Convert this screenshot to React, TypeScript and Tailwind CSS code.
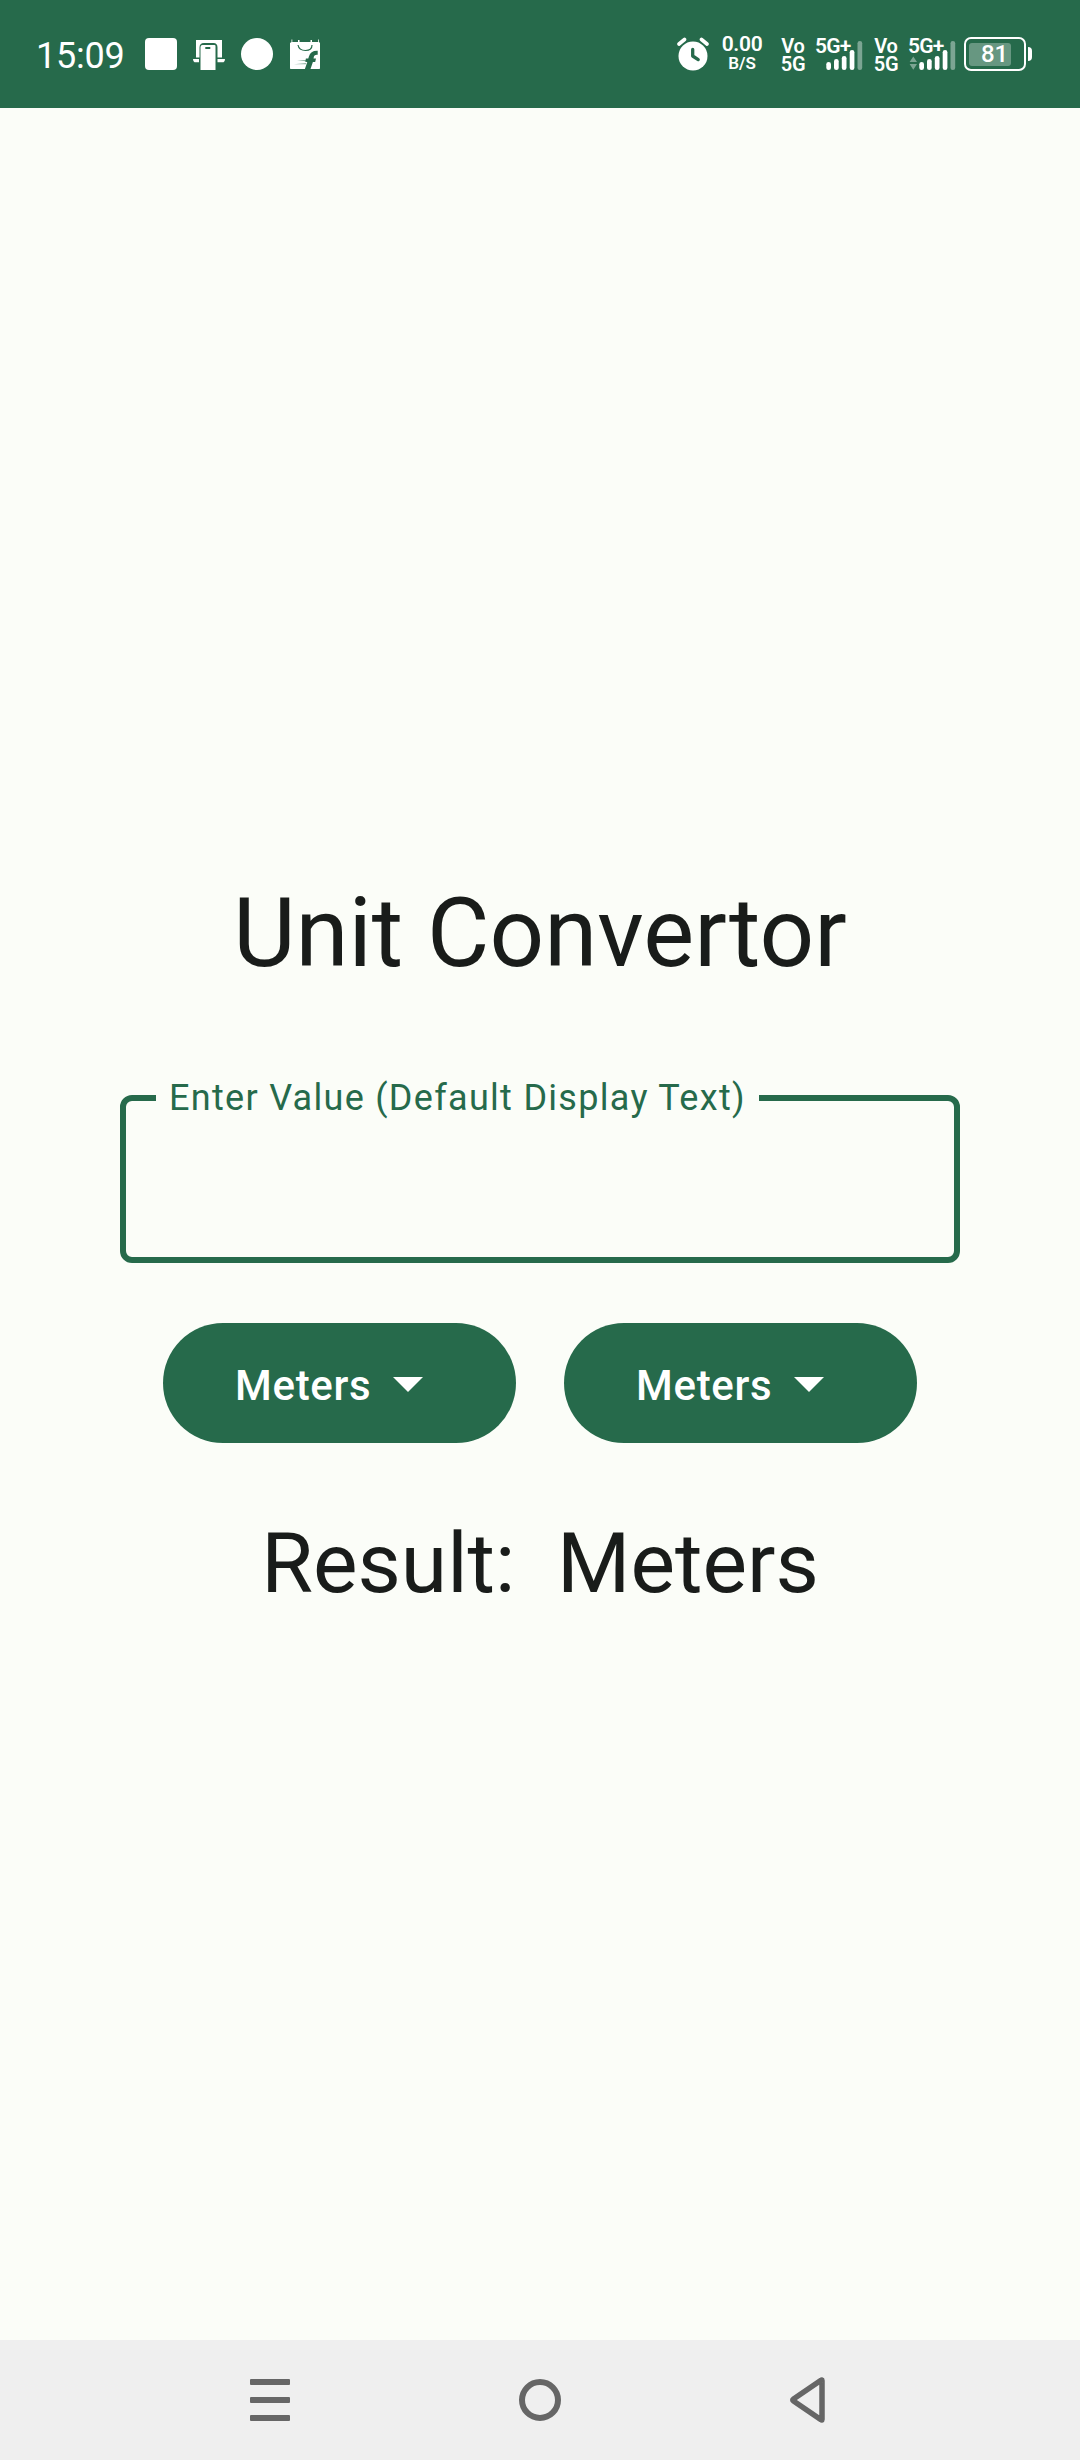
import React from "react";

function NotificationIcons() {
  return (
    <div className="flex h-8 gap-4">
      <div className="size-8 rounded-[4px] bg-white" />
      <svg className="size-8" viewBox="0 0 32 32" fill="#fff">
        <path d="M3 2h26v17.500H24.500V9.500Q24.500 5 20.500 5H11Q6.500 5 6.500 9.500V19.500H3z" />
        <path d="M0 21h6v3.300H1.500Q0 23.500 0 21zM24.500 21h7.500q0 2.500-1.500 3.300h-6z" />
        <path fillRule="evenodd" d="M9.500 7h12Q22.500 7 22.500 8V32H7.500V9Q7.500 7 9.500 7zM12.300 9v2h5V9z" />
      </svg>
      <div className="size-8 rounded-full bg-white" />
      <svg className="size-8" viewBox="0 0 32 32">
        <path
          fill="#fff"
          d="M2.500 1.500h.8v2.400h25.900V1.500h.8V4l1 1V30.300q0 .7-.7.700H1.700Q1 31 1 30.300V5l1.500-1z"
        />
        <path fill="none" stroke="#266a4b" strokeWidth="1.200" d="M9 7q1 5.500 7.500 5.500T23 7" />
        <path fill="#fff" d="M9 2h1.500v3H9zM21.500 2H23v3h-1.500z" />
        <path fill="#266a4b" d="M28.700 12.800v3.900q-3.200-.4-3.700 1.600l-.5 2.300h2.500l-.8 3.500h-2.300L21.500 31h-5.600l2.400-7-2-.2.600-3.200h2.400l.6-2.200q1.600-5.900 8.800-5.600z" />
        <path fill="#266a4b" opacity=".5" d="M8 22h10v1.400zM5 26.300l12-1.200v1.200z" />
      </svg>
    </div>
  );
}

function AlarmIcon() {
  return (
    <svg className="h-[34px] w-8" viewBox="0 0 32 34">
      <circle cx="16" cy="19" r="14.500" fill="#fff" />
      <path d="M2 7l5.500-4.500M30 7l-5.500-4.500" stroke="#fff" strokeWidth="3.600" strokeLinecap="round" />
      <path d="M15.700 12.500V19l5.500 3.600" fill="none" stroke="#266a4b" strokeWidth="3.300" strokeLinecap="round" strokeLinejoin="round" />
    </svg>
  );
}

function Volte() {
  return (
    <div className="flex h-9 w-6 flex-col items-center pt-px text-[20px] font-semibold leading-[18px] tracking-[-0.200px]">
      <span>Vo</span>
      <span>5G</span>
    </div>
  );
}

function Signal({ arrows = false }: { arrows?: boolean }) {
  return (
    <div className="relative h-9 w-[47px]">
      <svg className="h-9 w-[47px]" viewBox="0 0 47 36" fill="#fff">
        <rect x="10.300" y="26" width="4.700" height="8" rx="2.300" />
        <rect x="18" y="23" width="4.700" height="11" rx="2.300" />
        <rect x="25.800" y="20" width="4.700" height="14" rx="2.300" />
        <rect x="33.700" y="14" width="4.700" height="20" rx="2.300" />
        <rect x="41.500" y="5" width="4.700" height="29" rx="2.300" opacity=".4" />
        {arrows && <path d="M4.300 20.500l3.700 5.500H.6zM.6 28H8l-3.700 5.700z" opacity=".4" />}
      </svg>
      <span className="absolute left-[-1px] top-[-1px] text-[21px] font-semibold leading-[22px] tracking-[-0.800px]">5G+</span>
    </div>
  );
}

function Battery() {
  return (
    <div className="flex items-center gap-[2px]">
      <div className="relative flex h-[34px] w-[62px] items-center rounded-[7px] border-2 border-white px-[3px]">
        <div className="h-[23px] w-[42px] rounded-[3px] bg-white/30" />
        <span className="absolute left-[15px] top-0 text-[24px] font-medium leading-[31px] tracking-[-0.200px]">81</span>
      </div>
      <div className="h-[14px] w-1 rounded-r-[4px] bg-white" />
    </div>
  );
}

function StatusBar() {
  return (
    <header className="flex h-[108px] items-center justify-between bg-[#266a4b] pl-9 pr-12 text-white">
      <div className="flex items-center">
        <span className="w-[109px] pt-[3px] text-[36px] leading-[42px] tracking-[-0.200px]">15:09</span>
        <NotificationIcons />
      </div>
      <div className="flex items-center">
        <AlarmIcon />
        <div className="ml-[13px] flex h-9 w-10 flex-col items-center whitespace-nowrap font-semibold">
          <span className="text-[21px] leading-[16px] tracking-[-0.300px]">0.00</span>
          <span className="text-[17px] leading-[23px]">B/S</span>
        </div>
        <div className="ml-[19px]">
          <Volte />
        </div>
        <div className="ml-[11px]">
          <Signal />
        </div>
        <div className="ml-[11px]">
          <Volte />
        </div>
        <div className="ml-[11px]">
          <Signal arrows />
        </div>
        <div className="ml-2">
          <Battery />
        </div>
      </div>
    </header>
  );
}

function UnitButton() {
  return (
    <button className="flex h-[120px] w-[353px] items-center rounded-full bg-[#266a4b] pl-[72px] text-white">
      <span className="w-[158px] pt-[5px] text-left text-[42px] font-medium leading-[60px] tracking-[0.700px]">Meters</span>
      <svg className="mt-[3px] h-[15px] w-[30px]" viewBox="0 0 30 15" fill="#fff">
        <path d="M0 0h30L15 15z" />
      </svg>
    </button>
  );
}

function NavBar() {
  return (
    <nav className="flex h-[120px] items-center bg-[#efefef] pl-[250px]">
      <div className="flex w-10 flex-col gap-3">
        <div className="h-[6px] rounded-[1px] bg-[#666]" />
        <div className="h-[6px] rounded-[1px] bg-[#666]" />
        <div className="h-[6px] rounded-[1px] bg-[#666]" />
      </div>
      <div className="ml-[229px] size-[42px] rounded-full border-[6px] border-[#666]" />
      <svg className="ml-[228px] h-12 w-9" viewBox="0 0 36 48">
        <path d="M33 4.500V43.500Q33 44.500 32 43.700L4.500 25Q3 24 4.500 23L32 4.300Q33 3.500 33 4.500z" fill="none" stroke="#666" strokeWidth="5.500" strokeLinejoin="round" />
      </svg>
    </nav>
  );
}

export default function App() {
  return (
    <div className="flex h-[2460px] w-[1080px] flex-col bg-[#fbfdf8] font-['Roboto',sans-serif] text-[#191c1a]">
      <StatusBar />
      <main className="flex flex-1 flex-col items-center pt-[769px]">
        <h1 className="whitespace-pre text-[96px] leading-[112px]">Unit Convertor</h1>
        <fieldset className="mt-[88px] h-[186px] w-[840px] rounded-[12px] border-[6px] border-[#266a4b] pl-[30px]">
          <legend className="h-[42px] w-[603px] whitespace-nowrap pl-[13px] text-[36px] leading-[42px] tracking-[1.300px] text-[#266a4b]">
            Enter Value (Default Display Text)
          </legend>
        </fieldset>
        <div className="mt-[60px] flex gap-12">
          <UnitButton />
          <UnitButton />
        </div>
        <p className="mt-[72px] whitespace-pre text-[84px] leading-[98px]">Result:  Meters</p>
      </main>
      <NavBar />
    </div>
  );
}
